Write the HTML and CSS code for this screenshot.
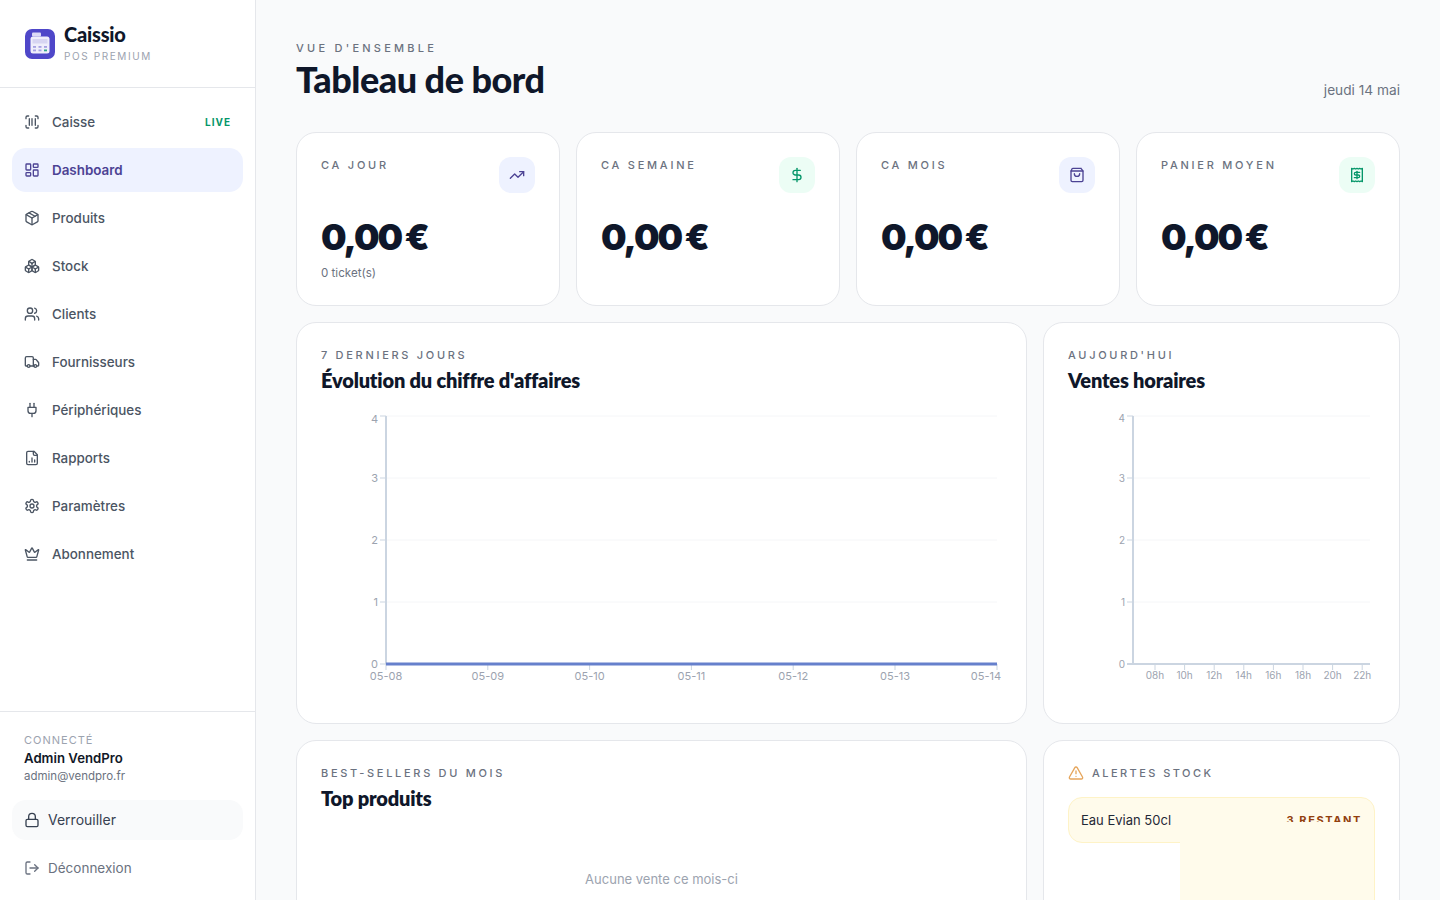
FILE: index.html
```html
<!DOCTYPE html>
<html lang="fr">
<head>
    <meta charset="UTF-8">
    <title>Caissio - Tableau de bord</title>
    <link rel="stylesheet" href="styles.css">
</head>
<body>

    <svg class="icon-defs" width="0" height="0">
        <symbol id="i-scan" viewBox="0 0 24 24"><path d="M3 7V5a2 2 0 0 1 2-2h2"/><path d="M17 3h2a2 2 0 0 1 2 2v2"/><path d="M21 17v2a2 2 0 0 1-2 2h-2"/><path d="M7 21H5a2 2 0 0 1-2-2v-2"/><path d="M8 7v10"/><path d="M12 7v10"/><path d="M17 7v10"/></symbol>
        <symbol id="i-dashboard" viewBox="0 0 24 24"><rect width="7" height="9" x="3" y="3" rx="1"/><rect width="7" height="5" x="14" y="3" rx="1"/><rect width="7" height="9" x="14" y="12" rx="1"/><rect width="7" height="5" x="3" y="16" rx="1"/></symbol>
        <symbol id="i-package" viewBox="0 0 24 24"><path d="M11 21.73a2 2 0 0 0 2 0l7-4A2 2 0 0 0 21 16V8a2 2 0 0 0-1-1.73l-7-4a2 2 0 0 0-2 0l-7 4A2 2 0 0 0 3 8v8a2 2 0 0 0 1 1.73z"/><path d="M12 22V12"/><polyline points="3.29 7 12 12 20.71 7"/><path d="m7.5 4.27 9 5.15"/></symbol>
        <symbol id="i-boxes" viewBox="0 0 24 24"><path d="M2.97 12.92A2 2 0 0 0 2 14.63v3.24a2 2 0 0 0 .97 1.71l3 1.8a2 2 0 0 0 2.06 0L12 19v-5.5l-5-3-4.03 2.42Z"/><path d="m7 16.5-4.74-2.85"/><path d="m7 16.5 5-3"/><path d="M7 16.5v5.17"/><path d="M12 13.5V19l3.97 2.38a2 2 0 0 0 2.06 0l3-1.8a2 2 0 0 0 .97-1.71v-3.24a2 2 0 0 0-.97-1.71L17 10.5l-5 3Z"/><path d="m17 16.5-5-3"/><path d="m17 16.5 4.74-2.85"/><path d="M17 16.5v5.17"/><path d="M7.97 4.42A2 2 0 0 0 7 6.13v4.37l5 3 5-3V6.13a2 2 0 0 0-.97-1.71l-3-1.8a2 2 0 0 0-2.06 0l-3 1.8Z"/><path d="M12 8 7.26 5.15"/><path d="m12 8 4.74-2.85"/><path d="M12 13.5V8"/></symbol>
        <symbol id="i-users" viewBox="0 0 24 24"><path d="M16 21v-2a4 4 0 0 0-4-4H6a4 4 0 0 0-4 4v2"/><circle cx="9" cy="7" r="4"/><path d="M22 21v-2a4 4 0 0 0-3-3.87"/><path d="M16 3.13a4 4 0 0 1 0 7.75"/></symbol>
        <symbol id="i-truck" viewBox="0 0 24 24"><path d="M14 18V6a2 2 0 0 0-2-2H4a2 2 0 0 0-2 2v11a1 1 0 0 0 1 1h2"/><path d="M15 18H9"/><path d="M19 18h2a1 1 0 0 0 1-1v-3.65a1 1 0 0 0-.22-.624l-3.48-4.35A1 1 0 0 0 17.52 8H14"/><circle cx="17" cy="18" r="2"/><circle cx="7" cy="18" r="2"/></symbol>
        <symbol id="i-plug" viewBox="0 0 24 24"><path d="M12 22v-5"/><path d="M9 8V2"/><path d="M15 8V2"/><path d="M18 8v5a4 4 0 0 1-4 4h-4a4 4 0 0 1-4-4V8Z"/></symbol>
        <symbol id="i-report" viewBox="0 0 24 24"><path d="M15 2H6a2 2 0 0 0-2 2v16a2 2 0 0 0 2 2h12a2 2 0 0 0 2-2V7Z"/><path d="M14 2v4a2 2 0 0 0 2 2h4"/><path d="M8 18v-1"/><path d="M12 18v-6"/><path d="M16 18v-3"/></symbol>
        <symbol id="i-settings" viewBox="0 0 24 24"><path d="M12.22 2h-.44a2 2 0 0 0-2 2v.18a2 2 0 0 1-1 1.73l-.43.25a2 2 0 0 1-2 0l-.15-.08a2 2 0 0 0-2.73.73l-.22.38a2 2 0 0 0 .73 2.73l.15.1a2 2 0 0 1 1 1.72v.51a2 2 0 0 1-1 1.74l-.15.09a2 2 0 0 0-.73 2.73l.22.38a2 2 0 0 0 2.73.73l.15-.08a2 2 0 0 1 2 0l.43.25a2 2 0 0 1 1 1.73V20a2 2 0 0 0 2 2h.44a2 2 0 0 0 2-2v-.18a2 2 0 0 1 1-1.73l.43-.25a2 2 0 0 1 2 0l.15.08a2 2 0 0 0 2.73-.73l.22-.39a2 2 0 0 0-.73-2.73l-.15-.08a2 2 0 0 1-1-1.74v-.5a2 2 0 0 1 1-1.74l.15-.09a2 2 0 0 0 .73-2.73l-.22-.38a2 2 0 0 0-2.73-.73l-.15.08a2 2 0 0 1-2 0l-.43-.25a2 2 0 0 1-1-1.73V4a2 2 0 0 0-2-2z"/><circle cx="12" cy="12" r="3"/></symbol>
        <symbol id="i-crown" viewBox="0 0 24 24"><path d="M11.562 3.266a.5.5 0 0 1 .876 0L15.39 8.87a1 1 0 0 0 1.516.294L21.183 5.5a.5.5 0 0 1 .798.519l-2.834 10.246a1 1 0 0 1-.956.734H5.81a1 1 0 0 1-.957-.734L2.02 6.02a.5.5 0 0 1 .798-.519l4.276 3.664a1 1 0 0 0 1.516-.294z"/><path d="M5 21h14"/></symbol>
        <symbol id="i-lock" viewBox="0 0 24 24"><rect width="18" height="11" x="3" y="11" rx="2"/><path d="M7 11V7a5 5 0 0 1 10 0v4"/></symbol>
        <symbol id="i-logout" viewBox="0 0 24 24"><path d="m16 17 5-5-5-5"/><path d="M21 12H9"/><path d="M9 21H5a2 2 0 0 1-2-2V5a2 2 0 0 1 2-2h4"/></symbol>
        <symbol id="i-trend" viewBox="0 0 24 24"><polyline points="22 7 13.5 15.5 8.5 10.5 2 17"/><polyline points="16 7 22 7 22 13"/></symbol>
        <symbol id="i-dollar" viewBox="0 0 24 24"><line x1="12" x2="12" y1="2" y2="22"/><path d="M17 5H9.5a3.5 3.5 0 0 0 0 7h5a3.5 3.5 0 0 1 0 7H6"/></symbol>
        <symbol id="i-bag" viewBox="0 0 24 24"><path d="M16 10a4 4 0 0 1-8 0"/><path d="M3.103 6.034h17.794"/><path d="M3.4 5.467a2 2 0 0 0-.4 1.2V20a2 2 0 0 0 2 2h14a2 2 0 0 0 2-2V6.667a2 2 0 0 0-.4-1.2l-2.1-2.8A2 2 0 0 0 18 2H6a2 2 0 0 0-1.6.8z"/></symbol>
        <symbol id="i-receipt" viewBox="0 0 24 24"><path d="M4 2v20l2-1 2 1 2-1 2 1 2-1 2 1 2-1 2 1V2l-2 1-2-1-2 1-2-1-2 1-2-1-2 1Z"/><path d="M16 8h-6a2 2 0 1 0 0 4h4a2 2 0 1 1 0 4H8"/><path d="M12 17.5v-11"/></symbol>
        <symbol id="i-alert" viewBox="0 0 24 24"><path d="m21.73 18-8-14a2 2 0 0 0-3.48 0l-8 14A2 2 0 0 0 4 21h16a2 2 0 0 0 1.73-3"/><path d="M12 9v4"/><path d="M12 17h.01"/></symbol>
    </svg>

    <div class="app">

        <!-- Sidebar -->
        <aside class="sidebar">
            <div class="brand">
                <svg class="brand-logo" viewBox="0 0 30 30">
                    <rect width="30" height="30" rx="7" fill="#4f47c9"/>
                    <rect x="7" y="3.5" width="9" height="4" rx="1" fill="#dcdaf6"/>
                    <rect x="5.5" y="7.5" width="19" height="17" rx="2.5" fill="#efeefb"/>
                    <rect x="7.5" y="10" width="15" height="4.5" fill="#d7d5f2"/>
                    <rect x="8" y="17" width="3" height="1.8" fill="#a5a1e2"/>
                    <rect x="13.5" y="17" width="3" height="1.8" fill="#a5a1e2"/>
                    <rect x="19" y="17" width="3" height="1.8" fill="#a5a1e2"/>
                    <rect x="8" y="20.5" width="3" height="1.8" fill="#a5a1e2"/>
                    <rect x="13.5" y="20.5" width="3" height="1.8" fill="#a5a1e2"/>
                    <rect x="19" y="20.5" width="3" height="1.8" fill="#34a58a"/>
                </svg>
                <div class="brand-text">
                    <div class="brand-name">Caissio</div>
                    <div class="brand-sub">POS PREMIUM</div>
                </div>
            </div>

            <nav class="nav">
                <a class="nav-item"><svg class="icon"><use href="#i-scan"/></svg>Caisse<span class="live">LIVE</span></a>
                <a class="nav-item active"><svg class="icon"><use href="#i-dashboard"/></svg>Dashboard</a>
                <a class="nav-item"><svg class="icon"><use href="#i-package"/></svg>Produits</a>
                <a class="nav-item"><svg class="icon"><use href="#i-boxes"/></svg>Stock</a>
                <a class="nav-item"><svg class="icon"><use href="#i-users"/></svg>Clients</a>
                <a class="nav-item"><svg class="icon"><use href="#i-truck"/></svg>Fournisseurs</a>
                <a class="nav-item"><svg class="icon"><use href="#i-plug"/></svg>Périphériques</a>
                <a class="nav-item"><svg class="icon"><use href="#i-report"/></svg>Rapports</a>
                <a class="nav-item"><svg class="icon"><use href="#i-settings"/></svg>Paramètres</a>
                <a class="nav-item"><svg class="icon"><use href="#i-crown"/></svg>Abonnement</a>
            </nav>

            <div class="side-footer">
                <div class="user">
                    <div class="user-label">CONNECTÉ</div>
                    <div class="user-name">Admin VendPro</div>
                    <div class="user-mail">admin@vendpro.fr</div>
                </div>
                <a class="side-btn lock"><svg class="icon"><use href="#i-lock"/></svg>Verrouiller</a>
                <a class="side-btn logout"><svg class="icon"><use href="#i-logout"/></svg>Déconnexion</a>
            </div>
        </aside>

        <!-- Main content -->
        <main class="main">
            <header class="page-head">
                <div class="page-title">
                    <div class="eyebrow">VUE D'ENSEMBLE</div>
                    <h1>Tableau de bord</h1>
                </div>
                <div class="date">jeudi 14 mai</div>
            </header>

            <section class="stats">
                <div class="card stat">
                    <div class="stat-top">
                        <span class="stat-label">CA JOUR</span>
                        <span class="stat-icon violet"><svg class="icon"><use href="#i-trend"/></svg></span>
                    </div>
                    <div class="stat-value">0,00 €</div>
                    <div class="stat-sub">0 ticket(s)</div>
                </div>
                <div class="card stat">
                    <div class="stat-top">
                        <span class="stat-label">CA SEMAINE</span>
                        <span class="stat-icon green"><svg class="icon"><use href="#i-dollar"/></svg></span>
                    </div>
                    <div class="stat-value">0,00 €</div>
                </div>
                <div class="card stat">
                    <div class="stat-top">
                        <span class="stat-label">CA MOIS</span>
                        <span class="stat-icon violet"><svg class="icon"><use href="#i-bag"/></svg></span>
                    </div>
                    <div class="stat-value">0,00 €</div>
                </div>
                <div class="card stat">
                    <div class="stat-top">
                        <span class="stat-label">PANIER MOYEN</span>
                        <span class="stat-icon green"><svg class="icon"><use href="#i-receipt"/></svg></span>
                    </div>
                    <div class="stat-value">0,00 €</div>
                </div>
            </section>

            <section class="row">
                <div class="card panel chart-panel">
                    <div class="kicker">7 DERNIERS JOURS</div>
                    <h2>Évolution du chiffre d'affaires</h2>
                    <svg class="chart" width="681" height="289" viewBox="0 0 681 289">
                        <g class="grid">
                            <line x1="65" x2="676" y1="6" y2="6"/>
                            <line x1="65" x2="676" y1="68" y2="68"/>
                            <line x1="65" x2="676" y1="130" y2="130"/>
                            <line x1="65" x2="676" y1="192" y2="192"/>
                        </g>
                        <g class="axis">
                            <line x1="65" x2="65" y1="6" y2="254"/>
                            <line x1="59" x2="65" y1="6" y2="6"/>
                            <line x1="59" x2="65" y1="68" y2="68"/>
                            <line x1="59" x2="65" y1="130" y2="130"/>
                            <line x1="59" x2="65" y1="192" y2="192"/>
                            <line x1="59" x2="65" y1="254" y2="254"/>
                            <line x1="65" x2="65" y1="254" y2="260"/>
                            <line x1="166.8" x2="166.8" y1="254" y2="260"/>
                            <line x1="268.6" x2="268.6" y1="254" y2="260"/>
                            <line x1="370.4" x2="370.4" y1="254" y2="260"/>
                            <line x1="472.2" x2="472.2" y1="254" y2="260"/>
                            <line x1="574" x2="574" y1="254" y2="260"/>
                            <line x1="676" x2="676" y1="254" y2="260"/>
                        </g>
                        <g class="tick-text y-text">
                            <text x="57" y="12.5">4</text>
                            <text x="57" y="72">3</text>
                            <text x="57" y="134">2</text>
                            <text x="57" y="196">1</text>
                            <text x="57" y="258">0</text>
                        </g>
                        <g class="tick-text x-text">
                            <text x="65" y="270">05-08</text>
                            <text x="166.8" y="270">05-09</text>
                            <text x="268.6" y="270">05-10</text>
                            <text x="370.4" y="270">05-11</text>
                            <text x="472.2" y="270">05-12</text>
                            <text x="574" y="270">05-13</text>
                            <text x="665" y="270">05-14</text>
                        </g>
                        <line class="data-line" x1="65" x2="676" y1="254" y2="254"/>
                    </svg>
                </div>
                <div class="card panel chart-panel">
                    <div class="kicker">AUJOURD'HUI</div>
                    <h2>Ventes horaires</h2>
                    <svg class="chart" width="307" height="289" viewBox="0 0 307 289">
                        <g class="grid">
                            <line x1="65" x2="302" y1="6" y2="6"/>
                            <line x1="65" x2="302" y1="68" y2="68"/>
                            <line x1="65" x2="302" y1="130" y2="130"/>
                            <line x1="65" x2="302" y1="192" y2="192"/>
                        </g>
                        <g class="axis">
                            <line x1="65" x2="65" y1="6" y2="254"/>
                            <line class="base" x1="59" x2="302" y1="254" y2="254"/>
                            <line x1="59" x2="65" y1="6" y2="6"/>
                            <line x1="59" x2="65" y1="68" y2="68"/>
                            <line x1="59" x2="65" y1="130" y2="130"/>
                            <line x1="59" x2="65" y1="192" y2="192"/>
                            <line x1="87" x2="87" y1="254" y2="260"/>
                            <line x1="116.6" x2="116.6" y1="254" y2="260"/>
                            <line x1="146.2" x2="146.2" y1="254" y2="260"/>
                            <line x1="175.8" x2="175.8" y1="254" y2="260"/>
                            <line x1="205.4" x2="205.4" y1="254" y2="260"/>
                            <line x1="235" x2="235" y1="254" y2="260"/>
                            <line x1="264.6" x2="264.6" y1="254" y2="260"/>
                            <line x1="294.2" x2="294.2" y1="254" y2="260"/>
                        </g>
                        <g class="tick-text small y-text">
                            <text x="57" y="12">4</text>
                            <text x="57" y="71.5">3</text>
                            <text x="57" y="133.5">2</text>
                            <text x="57" y="195.5">1</text>
                            <text x="57" y="257.5">0</text>
                        </g>
                        <g class="tick-text small x-text">
                            <text x="87" y="269">08h</text>
                            <text x="116.6" y="269">10h</text>
                            <text x="146.2" y="269">12h</text>
                            <text x="175.8" y="269">14h</text>
                            <text x="205.4" y="269">16h</text>
                            <text x="235" y="269">18h</text>
                            <text x="264.6" y="269">20h</text>
                            <text x="294.2" y="269">22h</text>
                        </g>
                    </svg>
                </div>
            </section>

            <section class="row">
                <div class="card panel bottom-panel">
                    <div class="kicker">BEST-SELLERS DU MOIS</div>
                    <h2>Top produits</h2>
                    <p class="empty">Aucune vente ce mois-ci</p>
                </div>
                <div class="card panel bottom-panel">
                    <div class="kicker alert-head"><svg class="icon"><use href="#i-alert"/></svg>ALERTES STOCK</div>
                    <div class="alert-row">
                        <span>Eau Evian 50cl</span>
                        <span class="alert-qty">3 RESTANT</span>
                        <div class="alert-patch"></div>
                    </div>
                </div>
            </section>
        </main>
    </div>

</body>
</html>
```

FILE: styles.css
```css
* {
    box-sizing: border-box;
}

body {
    margin: 0;
    font-family: "Inter", "Noto Sans", sans-serif;
    background: #f9fafb;
    color: #111827;
    height: 900px;
    overflow: hidden;
}

.icon-defs {
    position: absolute;
}

.icon {
    width: 16px;
    height: 16px;
    flex: none;
    fill: none;
    stroke: currentColor;
    stroke-width: 2;
    stroke-linecap: round;
    stroke-linejoin: round;
}

.app {
    display: flex;
    height: 900px;
    overflow: hidden;
}

/* Sidebar */
.sidebar {
    width: 256px;
    flex: none;
    display: flex;
    flex-direction: column;
    background: #fff;
    border-right: 1px solid #e5e7eb;
}

.brand {
    height: 88px;
    padding: 0 24px 0 25px;
    display: flex;
    align-items: center;
    gap: 9px;
    border-bottom: 1px solid #e5e7eb;
}

.brand-logo {
    width: 30px;
    height: 30px;
    flex: none;
    margin-top: 1px;
}

.brand-text {
    margin-top: -4px;
}

.brand-name {
    font-family: "Lato", sans-serif;
    font-size: 20px;
    font-weight: 900;
    line-height: 26px;
    letter-spacing: -0.2px;
    color: #0f172a;
}

.brand-sub {
    margin-top: 3px;
    font-size: 10px;
    line-height: 12px;
    letter-spacing: 1.6px;
    color: #9ca3af;
}

.nav {
    display: flex;
    flex-direction: column;
    gap: 4px;
    padding: 12px 12px 0;
}

.nav-item {
    height: 44px;
    padding: 0 12px;
    display: flex;
    align-items: center;
    gap: 12px;
    border-radius: 14px;
    font-size: 13.4px;
    font-weight: 500;
    color: #4b5563;
}

.nav-item.active {
    background: #eef2ff;
    color: #4c4394;
    font-weight: 600;
}

.live {
    margin-left: auto;
    font-size: 10px;
    font-weight: 700;
    letter-spacing: 1px;
    color: #059669;
}

.side-footer {
    margin-top: auto;
    padding: 20px 12px 12px;
    border-top: 1px solid #e5e7eb;
}

.user {
    padding: 0 12px;
    height: 68px;
}

.user-label {
    font-size: 11px;
    line-height: 16px;
    letter-spacing: 1px;
    color: #9ca3af;
}

.user-name {
    font-size: 13.2px;
    line-height: 20px;
    font-weight: 600;
    color: #111827;
}

.user-mail {
    font-size: 11.5px;
    line-height: 16px;
    color: #6b7280;
}

.side-btn {
    height: 40px;
    padding: 0 12px;
    display: flex;
    align-items: center;
    gap: 8px;
    border-radius: 14px;
    font-size: 14px;
}

.side-btn.lock {
    background: #f9fafb;
    color: #374151;
    padding-bottom: 2px;
}

.side-btn.lock .icon {
    margin-top: 2px;
}

.side-btn.logout {
    margin-top: 8px;
    font-size: 13.5px;
    color: #6b7280;
}

/* Main */
.main {
    flex: 1;
    min-width: 0;
    padding: 40px 40px 0;
}

.page-head {
    display: flex;
    justify-content: space-between;
    align-items: flex-end;
    height: 60px;
    margin-bottom: 32px;
}

.page-title {
    align-self: flex-start;
}

.eyebrow {
    font-size: 11px;
    line-height: 16px;
    font-weight: 500;
    letter-spacing: 3.25px;
    color: #6b7280;
}

h1 {
    margin: 3px 0 0;
    font-family: "Lato", sans-serif;
    font-size: 36px;
    line-height: 40px;
    font-weight: 900;
    letter-spacing: -0.5px;
    color: #0f172a;
}

.date {
    font-size: 13.7px;
    line-height: 20px;
    color: #6b7280;
}

.card {
    background: #fff;
    border: 1px solid #e5e7eb;
    border-radius: 20px;
}

.stats {
    display: grid;
    grid-template-columns: repeat(4, 1fr);
    gap: 16px;
    margin-bottom: 16px;
}

.stat {
    height: 174px;
    padding: 24px;
}

.stat-top {
    display: flex;
    justify-content: space-between;
    align-items: flex-start;
}

.stat-label {
    font-size: 11px;
    line-height: 16px;
    font-weight: 500;
    letter-spacing: 2.75px;
    color: #6b7280;
}

.stat-icon {
    width: 36px;
    height: 36px;
    display: flex;
    align-items: center;
    justify-content: center;
    border-radius: 12px;
}

.stat-icon.violet {
    background: #eef2ff;
    color: #4c4394;
}

.stat-icon.green {
    background: #ecfdf5;
    color: #059669;
}

.stat-value {
    margin-top: 24px;
    font-family: "Inter", sans-serif;
    font-size: 36px;
    line-height: 40px;
    font-weight: 900;
    letter-spacing: -1.9px;
    word-spacing: -2px;
    color: #0f172a;
}

.stat-sub {
    margin-top: 8px;
    font-size: 11.6px;
    line-height: 16px;
    color: #6b7280;
}

.row {
    display: grid;
    grid-template-columns: 731px 1fr;
    gap: 16px;
    margin-bottom: 16px;
}

.panel {
    padding: 24px;
}

.chart-panel {
    height: 402px;
}

.bottom-panel {
    height: 300px;
}

.kicker {
    font-size: 11px;
    line-height: 16px;
    font-weight: 500;
    letter-spacing: 2.7px;
    color: #6b7280;
}

h2 {
    margin: 3px 0 0;
    font-family: "Lato", sans-serif;
    font-size: 20px;
    line-height: 28px;
    font-weight: 800;
    letter-spacing: -0.2px;
    color: #0f172a;
}

.chart {
    display: block;
    margin-top: 16px;
}

.grid line {
    stroke: #f5f6f8;
    stroke-width: 1;
}

.axis line {
    stroke: #cbd5e1;
    stroke-width: 1;
}

.axis line:first-child,
.axis line.base {
    stroke-width: 2;
}

.tick-text {
    font-size: 11px;
    fill: #9ca3af;
}

.tick-text.small {
    font-size: 10px;
}

.y-text {
    text-anchor: end;
}

.x-text {
    text-anchor: middle;
}

.data-line {
    stroke: #6680cc;
    stroke-width: 3;
}

.empty {
    margin: 57px 0 0;
    text-align: center;
    font-size: 13px;
    line-height: 20px;
    color: #9ca3af;
}

.alert-head {
    display: flex;
    align-items: center;
    gap: 8px;
    letter-spacing: 2.45px;
}

.alert-head .icon {
    color: #d97706;
    opacity: 0.65;
}

.alert-row {
    position: relative;
    height: 46px;
    margin-top: 16px;
    padding: 0 12px;
    display: flex;
    align-items: center;
    justify-content: space-between;
    background: #fffbeb;
    border: 1px solid #fef3c7;
    border-radius: 14px;
    font-size: 13px;
    color: #1f2937;
}

.alert-qty {
    font-size: 11px;
    font-weight: 700;
    letter-spacing: 1.6px;
    color: #92400e;
}

/* the lower part of the row repaints as a plain block in the reference */
.alert-patch {
    position: absolute;
    top: 24px;
    left: 111px;
    right: -1px;
    height: 120px;
    background: #fffbeb;
    border-right: 1px solid #fef3c7;
}
```
